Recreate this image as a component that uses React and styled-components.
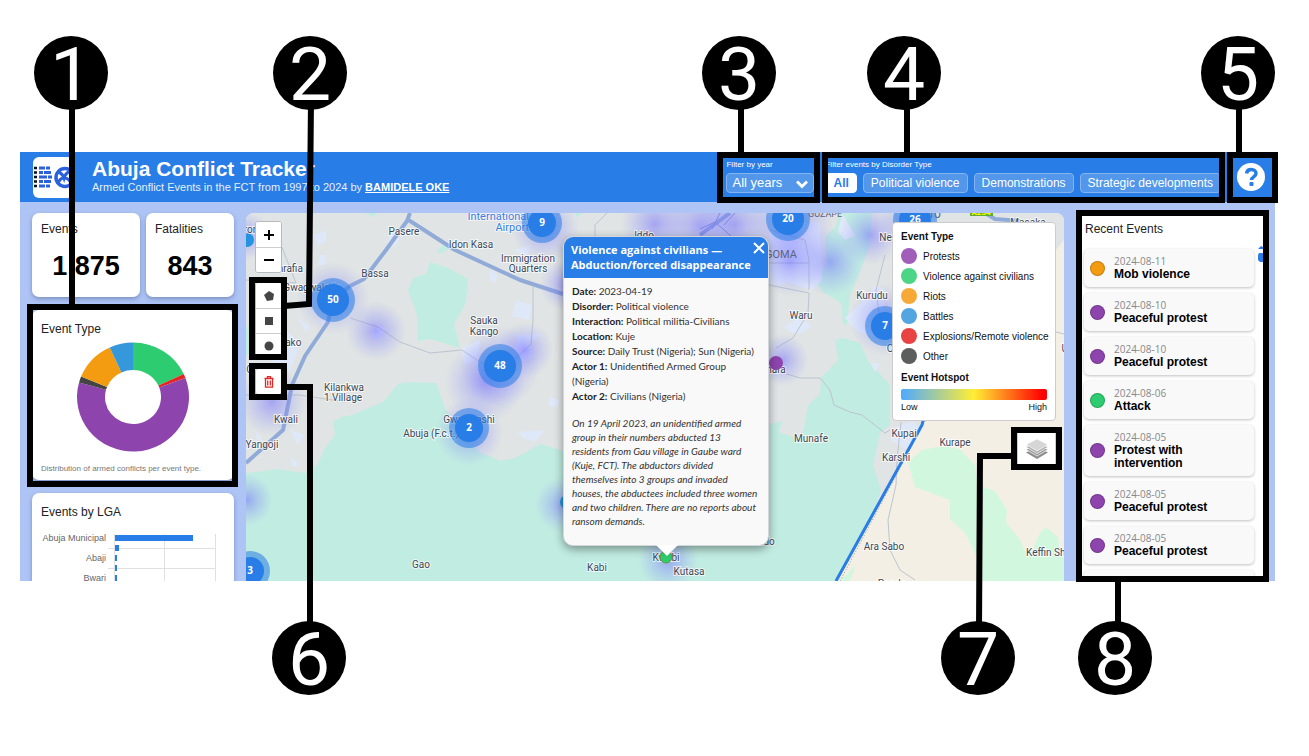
import React from "react";
import styled, { createGlobalStyle, css } from "styled-components";

const sans = '"Liberation Sans", Arial, sans-serif';
const humanist = '"Open Sans", "Noto Sans", sans-serif';
const blue = "#287de6";

const GlobalStyle = createGlobalStyle`
  *, *::before, *::after { box-sizing: border-box; }
  body { margin: 0; background: #fff; font-family: ${sans}; color: #222; }
  button, select { font: inherit; margin: 0; }
  h1, h2, h3, p, ul, dl, dd { margin: 0; padding: 0; }
`;

const Page = styled.div`
  position: relative;
  display: flex;
  flex-direction: column;
  height: 100vh;
  min-width: 1180px;
  min-height: 640px;
  padding: 152px 34px 175px 20px;
  overflow: hidden;
`;

const Dashboard = styled.main`
  display: flex;
  flex-direction: column;
  flex: 1;
  min-height: 0;
  background: #adc4f5;
  overflow: hidden;
`;

/* Header */

const Header = styled.header`
  display: flex;
  align-items: center;
  flex: none;
  height: 50px;
  padding: 0 10px 0 13px;
  background: ${blue};
  color: #fff;
`;

const LogoBox = styled.div`
  width: 41px;
  height: 41px;
  margin-right: 18px;
  border-radius: 6px;
  background: #fff;
  overflow: hidden;
  svg { display: block; }
`;

const Titles = styled.div`
  flex: 1;
  padding-bottom: 2px;
  white-space: nowrap;
`;

const Title = styled.h1`
  font-size: 21px;
  line-height: 22px;
  font-weight: 700;
`;

const Subtitle = styled.p`
  font-size: 11px;
  line-height: 14px;
  color: #e6effc;
  a { color: #fff; font-weight: 700; }
`;

const FilterGroup = styled.div`
  display: flex;
  flex-direction: column;
  gap: 3px;
  margin-left: 11px;
  padding-bottom: 2px;
  font-size: 8px;
  line-height: 10px;
  white-space: nowrap;
`;

const SelectWrap = styled.div`
  position: relative;
  display: flex;
  svg { position: absolute; right: 6px; top: 7px; pointer-events: none; }
`;

const YearSelect = styled.select`
  appearance: none;
  width: 88px;
  height: 20px;
  padding: 0 5px;
  border: 1px solid #85b4f0;
  border-radius: 4px;
  background: #5397ea;
  color: #fff;
  font-size: 13px;
  line-height: 18px;
`;

const Chips = styled.div`
  display: flex;
  gap: 6px;
`;

const Chip = styled.button`
  height: 20px;
  padding: 0 7px;
  border: 1px solid ${(p) => (p.$active ? "#fff" : "#85b4f0")};
  border-radius: 4px;
  background: ${(p) => (p.$active ? "#fff" : "#5397ea")};
  color: ${(p) => (p.$active ? blue : "#fff")};
  font-size: 12px;
  line-height: 18px;
  font-weight: ${(p) => (p.$active ? 700 : 400)};
`;

const HelpButton = styled.button`
  display: flex;
  width: 28px;
  height: 28px;
  margin-left: 16px;
  padding: 0;
  border: 0;
  background: none;
`;

/* Body columns */

const Body = styled.div`
  display: flex;
  flex: 1;
  gap: 12px;
  min-height: 0;
  padding: 11px 12px 0;
`;

const Sidebar = styled.div`
  display: flex;
  flex-direction: column;
  gap: 13px;
  width: 202px;
  flex: none;
`;

const CardRow = styled.div`
  display: flex;
  gap: 6px;
`;

const Card = styled.section`
  flex: ${(p) => p.$grow || "none"};
  height: ${(p) => (p.$height ? `${p.$height}px` : "auto")};
  padding: ${(p) => (p.$chart ? 11 : 8)}px 9px 8px;
  border-radius: 7px;
  background: #fff;
  box-shadow: 0 2px 4px rgba(60, 80, 130, 0.45);
`;

const CardTitle = styled.h2`
  font-size: 12px;
  line-height: 16px;
  font-weight: 400;
  color: #222;
`;

const Value = styled.p`
  padding-top: 14px;
  font-size: 27px;
  line-height: 30px;
  font-weight: 700;
  text-align: center;
  color: #000;
`;

const Donut = styled.svg`
  display: block;
  margin: 5px auto 11px;
`;

const Note = styled.p`
  font-size: 8px;
  line-height: 12px;
  color: #777;
  white-space: nowrap;
`;

const ChartSlot = styled.div`
  margin: 9px -9px 0 -1px;
  svg { display: block; overflow: visible; }
`;

/* Map */

const MapArea = styled.section`
  position: relative;
  flex: 1;
  min-width: 0;
  border-radius: 8px 8px 0 0;
  background: #f4efe4;
  overflow: hidden;
`;

const MapSvg = styled.svg`
  display: block;
  width: 100%;
  height: 100%;
  font-family: Roboto, sans-serif;
`;

const Controls = styled.div`
  position: absolute;
  left: 9px;
  top: 8px;
  display: flex;
  flex-direction: column;
  width: 27px;
`;

const ControlGroup = styled.div`
  margin-bottom: ${(p) => p.$after || 0}px;
  border: 1px solid #b7b9bb;
  border-radius: 3px;
  background: #fff;
  overflow: hidden;
`;

const ControlButton = styled.button`
  display: flex;
  align-items: center;
  justify-content: center;
  width: 25px;
  height: 25px;
  padding: 0;
  border: 0;
  background: #fff;
  & + & { border-top: 1px solid #ccc; }
`;

const Popup = styled.article`
  position: absolute;
  left: 317px;
  top: 23px;
  width: 206px;
  height: 310px;
  border: 1px solid #d3d6da;
  border-radius: 10px;
  background: #f9f9f9;
  box-shadow: 0 3px 10px rgba(0, 0, 0, 0.4);
  font-family: ${humanist};
  &::after {
    content: "";
    position: absolute;
    left: 92px;
    top: 308px;
    border: 11px solid transparent;
    border-top-color: #fff;
    border-bottom: 0;
  }
`;

const PopupHead = styled.header`
  display: flex;
  justify-content: space-between;
  height: 41px;
  padding: 5px 3px 0 7px;
  border-radius: 9px 9px 0 0;
  background: ${blue};
  color: #fff;
  h2 {
    font-size: 11px;
    line-height: 15px;
    font-weight: 700;
    white-space: nowrap;
  }
`;

const CloseButton = styled.button`
  display: flex;
  align-self: flex-start;
  padding: 0;
  border: 0;
  background: none;
`;

const PopupBody = styled.div`
  padding: 6px 6px 0 8px;
  font-family: Lato, ${humanist};
  font-size: 10px;
  line-height: 15px;
  color: #333;
  white-space: nowrap;
  b { color: #222; }
`;

const Story = styled.p`
  padding-top: 12px;
  line-height: 14px;
  font-style: italic;
`;

const Legend = styled.aside`
  position: absolute;
  right: 8px;
  top: 9px;
  width: 164px;
  height: 199px;
  padding: 6px 8px;
  border: 1px solid #ccc;
  border-radius: 4px;
  background: #fff;
  font-size: 10px;
  color: #111;
  h3 { font-size: 10px; line-height: 16px; font-weight: 700; }
  ul { list-style: none; padding: 3px 0 6px; }
`;

const LegendItem = styled.li`
  display: flex;
  align-items: center;
  gap: 6px;
  height: 16px;
  margin-bottom: 4px;
  &:last-child { margin-bottom: 0; }
  white-space: nowrap;
  &::before {
    content: "";
    flex: none;
    width: 16px;
    height: 16px;
    border-radius: 50%;
    background: ${(p) => p.$color};
  }
`;

const HeatBar = styled.div`
  height: 11px;
  margin-top: 3px;
  border-radius: 2px;
  background: linear-gradient(90deg, #4eaaff, #ffee35 50%, #ff0000 97%);
`;

const HeatScale = styled.div`
  display: flex;
  justify-content: space-between;
  padding-top: 1px;
  font-size: 9px;
  line-height: 12px;
`;

const LayersButton = styled.button`
  position: absolute;
  right: 8px;
  top: 219px;
  display: flex;
  align-items: center;
  justify-content: center;
  width: 39px;
  height: 34px;
  padding: 0;
  border: 1px solid #ccc;
  background: #fff;
`;

/* Recent events */

const Recent = styled.aside`
  position: relative;
  flex: none;
  display: flex;
  flex-direction: column;
  width: 187px;
  padding: 8px 9px 0;
  background: #fff;
  overflow: hidden;
`;

const EventList = styled.ul`
  display: flex;
  flex-direction: column;
  gap: 6px;
  margin-left: -1px;
  padding-top: 12px;
  list-style: none;
`;

const EventItem = styled.li`
  display: flex;
  align-items: center;
  flex: none;
  gap: 9px;
  padding: 6px 8px 6px 6px;
  border-radius: 5px;
  background: #f9f9f9;
  box-shadow: 0 1px 3px rgba(0, 0, 0, 0.25);
  &::before {
    content: "";
    flex: none;
    width: 15px;
    height: 15px;
    border: 1px solid rgba(0, 0, 0, 0.2);
    border-radius: 50%;
    background: ${(p) => p.$color};
  }
  time {
    display: block;
    font: 10px/13px ${humanist};
    color: #888;
  }
  strong {
    display: block;
    font-size: 12px;
    line-height: 13px;
    color: #000;
  }
`;

const ScrollHint = styled.svg`
  position: absolute;
  right: 0;
  top: 33px;
`;

/* Numbered callouts drawn over the dashboard */

const place = css`
  position: absolute;
  left: ${(p) => (p.$left === undefined ? "auto" : `${p.$left}px`)};
  right: ${(p) => (p.$right === undefined ? "auto" : `${p.$right}px`)};
  top: ${(p) => p.$top}px;
`;

const Frame = styled.div`
  ${place}
  width: ${(p) => p.$w}px;
  height: ${(p) => p.$h}px;
  border: 6px solid #000;
  pointer-events: none;
`;

const Marker = styled.div`
  ${place}
  width: 74px;
  height: 74px;
  border-radius: 50%;
  background: #000;
  color: #fff;
  font-family: Roboto, sans-serif;
  font-size: 75px;
  line-height: 76px;
  text-align: center;
`;

const Leaders = styled.svg`
  position: absolute;
  left: 0;
  top: 0;
  pointer-events: none;
`;

const point = (deg, rx, ry) => {
  const a = (deg * Math.PI) / 180;
  return `${(56 + rx * Math.sin(a)).toFixed(2)} ${(55 - ry * Math.cos(a)).toFixed(2)}`;
};

const slice = (from, to) => {
  const big = to - from > 180 ? 1 : 0;
  return `M${point(from, 56, 54.5)}A56 54.5 0 ${big} 1 ${point(to, 56, 54.5)}L${point(to, 28, 27)}A28 27 0 ${big} 0 ${point(from, 28, 27)}Z`;
};

const slices = [
  [0, 65, "#2ecc71"],
  [65, 69.5, "#e32626"],
  [69.5, 285.5, "#8e44ad"],
  [285.5, 292, "#444"],
  [292, 335.5, "#f39c12"],
  [335.5, 360, "#3498db"],
];

const legend = [
  ["Protests", "#a05eb9"],
  ["Violence against civilians", "#4dd586"],
  ["Riots", "#f6a937"],
  ["Battles", "#53a6e0"],
  ["Explosions/Remote violence", "#e94242"],
  ["Other", "#5c5d5d"],
];

const events = [
  ["2024-08-11", "Mob violence", "#f39c12"],
  ["2024-08-10", "Peaceful protest", "#8e44ad"],
  ["2024-08-10", "Peaceful protest", "#8e44ad"],
  ["2024-08-06", "Attack", "#2ecc71"],
  ["2024-08-05", "Protest with intervention", "#8e44ad"],
  ["2024-08-05", "Peaceful protest", "#8e44ad"],
  ["2024-08-05", "Peaceful protest", "#8e44ad"],
  ["2024-08-04", "Peaceful protest", "#8e44ad"],
];

const heat = [
  [333, 298, 36], [376, 331, 30], [500, 366, 40], [485, 382, 40], [525, 350, 28],
  [469, 432, 34], [247, 500, 26], [246, 236, 24], [272, 402, 34], [545, 228, 34],
  [566, 285, 26], [563, 505, 28], [668, 560, 30], [655, 224, 34], [700, 226, 40],
  [735, 225, 38], [790, 226, 44], [790, 262, 34], [830, 262, 34], [870, 235, 30],
  [885, 320, 36], [782, 360, 26], [910, 222, 30],
];

const clusters = [
  [542, 223, 9, 20, 14], [333, 300, 50, 22, 16], [500, 366, 48, 22, 16],
  [469, 428, 2, 20, 14], [788, 219, 20, 22, 16], [915, 220, 26, 22, 16],
  [885, 326, 7, 20, 14], [250, 571, 3, 20, 14],
];

const places = [
  [404, 235, "Pasere"], [471, 248, "Idon Kasa"], [528, 262, "Immigration"],
  [528, 272, "Quarters"], [375, 277, "Bassa"], [484, 324, "Sauka"], [484, 335, "Kango"],
  [344, 391, "Kilankwa"], [343, 401, "1 Village"], [286, 423, "Kwali"], [262, 448, "Yangoji"],
  [431, 437, "Abuja (F.c.t.)"], [469, 423, "Gwagwashi"], [421, 568, "Gao"], [597, 571, "Kabi"],
  [689, 575, "Kutasa"], [666, 561, "Kwabi"], [287, 272, "Anrafia"], [312, 291, "Gwagwalada"],
  [285, 346, "Tunako"], [258, 373, "Gurdi"], [251, 233, "ron"], [801, 319, "Waru"],
  [872, 299, "Kurudu"], [907, 241, "New Nyanya"], [900, 352, "Orozo"],
  [770, 373, "Anhara"], [811, 442, "Munafe"], [904, 437, "Kupai"],
  [896, 461, "Karshi"], [955, 446, "Kurape"], [884, 550, "Ara Sabo"],
  [1054, 556, "Keffin Shanu"], [1028, 226, "Masaka"], [1070, 352, "Uke"],
  [892, 587, "Panda"], [763, 545, "Gudo"], [644, 239, "Iddo"],
];

function MapDrawing() {
  return (
    <MapSvg viewBox="246 213 818 368" preserveAspectRatio="xMinYMin slice" role="img" aria-label="Map of conflict events in the FCT">
      <defs>
        <radialGradient id="heat">
          <stop offset="0" stopColor="#6964ff" stopOpacity="0.5" />
          <stop offset="0.5" stopColor="#7c7cff" stopOpacity="0.26" />
          <stop offset="1" stopColor="#8c90ff" stopOpacity="0" />
        </radialGradient>
      </defs>
      <path d="M246 213H1064V240L1040 300L923 421L836 581H246Z" fill="#e0e4e4" />
      <path d="M246 473L257 472L277 469L305 473L317 465L325 448L335 435L333 422L342 417L352 415L383 402L398 384L410 382L436 383L445 408L460 430L480 452L500 461L515 458L541 444L563 451L600 450L769 424L783 421L779 432L795 438L803 432L808 405L820 394L821 378L838 360L835 340L843 338L860 343L869 362L890 385L890 425L880 433L873 465L881 490L874 510L836 581H246Z" fill="#c1ece1" />
      <path d="M430 262L448 268L468 279L466 302L454 324L460 348L430 339L418 341L417 315L408 290L413 278L426 274Z" fill="#c1ece1" />
      <path d="M840 213H872L869 248L859 274L850 295L847 325L843 324L841 303L823 292L817 283L826 262L825 237L835 227Z" fill="#c1ece1" />
      <path d="M437 251L445 243L450 248L440 254ZM365 213H377L373 217ZM575 213H582L577 218ZM246 330L252 318V350L246 356Z" fill="#c1ece1" />
      <path d="M923 421L836 581H1064V240L1056 250V421Z" fill="#f4efe4" />
      <path d="M908 462L922 450L942 446L960 449L975 465L978 485L995 491L1007 510L1006 522L1020 540L1028 559L1040 533L1046 527L1058 537L1060 553L1064 556V581H980L978 560L966 534L950 519L950 500L915 487Z" fill="#d2f7df" />
      <path d="M856 565L840 581H850Z" fill="#d2f7df" />
      <g fill="#dfe8f8">
        <path d="M313 235L325 230L327 240L318 246ZM320 255H325V265H318ZM298 318L310 326L306 333ZM255 430L262 438L258 443ZM290 430L305 435L298 445ZM290 458L300 464L293 467ZM320 320L327 318L324 328ZM262 318L280 322L300 345L290 372L262 355Z" />
        <path d="M390 230L400 238L395 247L388 243ZM490 270L498 275L495 283L489 280ZM516 300L532 305L529 320L512 316ZM517 335L542 334L530 342L532 358L515 360ZM462 348L480 340L478 360L464 364ZM518 432L545 430L535 442L523 438ZM550 397L560 400L557 407L548 405ZM378 325L386 328L380 340L370 336ZM515 250L530 245L528 258Z" />
        <path d="M770 225L820 222L822 280L812 290L790 283L770 285ZM845 318L862 302L875 285L885 290L880 340L855 330ZM870 362L880 364L875 372ZM890 430L912 421L922 430L908 450L892 441Z" />
        <path d="M784 326L800 318L812 326L800 334L790 332ZM842 213V213L855 235L845 240L838 232Z" />
      </g>
      <path d="M769 390L808 395L819 395L808 405L803 432L795 438L779 430L783 421L769 424Z" fill="#e0e4e4" />
      <g fill="none" stroke="#bcc4d0" strokeWidth="1">
        <path d="M350 318L378 327L400 342L430 353L462 350L486 366M533 287V320L531 344L510 364M607 213L595 225V240M769 285L809 293L808 313L793 338L776 348M770 230L805 240L809 260V290M769 263H809M780 372L800 378L820 378L830 390L834 405L850 412L862 415L885 433L890 430M901 422L897 460L896 485L888 520L890 550L900 570L915 580M885 255L876 290L880 320M1056 332L1064 334" />
        <path d="M281 245L296 283L246 280M246 395H300L345 402" />
      </g>
      <g fill="none" stroke="#91abd8" strokeWidth="4" strokeLinejoin="round">
        <path d="M410 213L407 221L386 250L364 279L350 286L333 300L328 322L305 356L292 385L283 430L246 463M407 219L455 250L520 280L563 294M700 235L730 213M985 213L995 219L1020 221" />
      </g>
      <path d="M700 229L715 222L731 236M720 213L712 229M735 213L724 225" fill="none" stroke="#8195c8" strokeWidth="1" />
      {heat.map(([x, y, r]) => <circle key={`${x}-${y}`} cx={x} cy={y} r={r} fill="url(#heat)" />)}
      <path d="M925 421L840 581" fill="none" stroke="#999" strokeWidth="1" strokeDasharray="1 2" />
      <path d="M923 421L922 425L836 581" fill="none" stroke="#287de6" strokeWidth="3" />
      <circle cx="247" cy="240" r="7" fill="#2494e0" />
      <circle cx="567" cy="502" r="7" fill="#2494e0" />
      <rect x="970" y="207" width="23" height="9" fill="#5fae32" />
      <text x="981" y="215" fontSize="8" fontWeight="700" fill="#ff0" textAnchor="middle">A234</text>
      <g fontSize="10" textAnchor="middle" fill="#3d4859" stroke="#fff" strokeWidth="2" strokeOpacity="0.7" paintOrder="stroke">
        {places.map(([x, y, name]) => <text key={name} x={x} y={y}>{name}</text>)}
      </g>
      <g fontSize="11" textAnchor="end" fill="#3b7fe0" stroke="#fff" strokeWidth="2" strokeOpacity="0.6" paintOrder="stroke">
        <text x="529" y="220">International</text>
        <text x="529" y="231">Airport</text>
      </g>
      <g fontSize="9" fill="#5d6580">
        <text x="808" y="217">GUZAPE</text>
        <text x="765" y="258" fontSize="11">GOMA</text>
        <text x="930" y="218" fontSize="12">ro</text>
      </g>
      <circle cx="666" cy="557" r="6" fill="#2ecc71" stroke="#6d9a35" strokeWidth="1" />
      <circle cx="776" cy="363" r="7" fill="#8e44ad" />
      {clusters.map(([x, y, n, outer, inner]) => (
        <g key={n}>
          <circle cx={x} cy={y} r={outer} fill="#287de6" fillOpacity="0.55" />
          <circle cx={x} cy={y} r={inner} fill={blue} />
          <text x={x} y={y + 3} fontFamily={humanist} fontSize="10" fontWeight="700" fill="#fff" textAnchor="middle">{n}</text>
        </g>
      ))}
    </MapSvg>
  );
}

function Logo() {
  return (
    <svg width="41" height="41" viewBox="0 0 41 41" aria-hidden="true">
      <path d="M1 11h3M1 15.500h3M1 20h3M1 24.500h3M1 29h3" stroke="#111" strokeWidth="2.500" />
      <path d="M6 11h6m1 0h4M6 15.500h4m1 0h7M6 20h8m1 0h4M6 24.500h4m1 0h7M6 29h6m1 0h4" stroke="#2b61dc" strokeWidth="2.800" />
      <circle cx="32" cy="20.500" r="9" fill="none" stroke="#2b61dc" strokeWidth="3.500" />
      <path d="M25 15c3 1 5 3 6 6c1-4 4-6 7-7M25 27c1-4 3-6 6-6c3 0 6 2 7 6" fill="none" stroke="#2b61dc" strokeWidth="3" />
    </svg>
  );
}

function LgaChart() {
  const bars = [78, 4, 2, 2, 2, 2];
  return (
    <svg width="190" height="90" viewBox="0 0 190 90" role="img" aria-label="Events by LGA">
      <path d="M74.500 5V90M124.500 5V90M175.500 5V90M68 19.500H176M68 39.500H176M68 59.500H176" stroke="#e0e0e0" fill="none" />
      {bars.map((w, i) => <rect key={i} x="75" y={6 + i * 10} width={w} height="6" fill={blue} />)}
      <g fontSize="9" fill="#666" textAnchor="end">
        <text x="66" y="12">Abuja Municipal</text>
        <text x="66" y="32">Abaji</text>
        <text x="66" y="52">Bwari</text>
      </g>
    </svg>
  );
}

export default function App() {
  return (
    <Page>
      <GlobalStyle />
      <Dashboard>
        <Header>
          <LogoBox><Logo /></LogoBox>
          <Titles>
            <Title>Abuja Conflict Tracker</Title>
            <Subtitle>Armed Conflict Events in the FCT from 1997 to 2024 by <a href="#author">BAMIDELE OKE</a></Subtitle>
          </Titles>
          <FilterGroup>
            <label htmlFor="year">Filter by year</label>
            <SelectWrap>
              <YearSelect id="year" defaultValue="all"><option value="all">All years</option></YearSelect>
              <svg width="12" height="9" viewBox="0 0 12 9"><path d="M1 1.500L6 6.500L11 1.500" fill="none" stroke="#fff" strokeWidth="3" /></svg>
            </SelectWrap>
          </FilterGroup>
          <FilterGroup>
            <span id="disorder">Filter events by Disorder Type</span>
            <Chips role="group" aria-labelledby="disorder">
              <Chip $active>All</Chip>
              <Chip>Political violence</Chip>
              <Chip>Demonstrations</Chip>
              <Chip>Strategic developments</Chip>
            </Chips>
          </FilterGroup>
          <HelpButton aria-label="Help">
            <svg width="28" height="28" viewBox="0 0 28 28">
              <circle cx="14" cy="14" r="14" fill="#fff" />
              <path d="M9.500 10.500C10 7.500 12 6.500 14.200 6.500C17 6.500 19 8.200 19 10.600C19 14 14.500 13.800 14.500 17" fill="none" stroke={blue} strokeWidth="3.500" />
              <rect x="12.500" y="19" width="4" height="4" rx="1" fill={blue} />
            </svg>
          </HelpButton>
        </Header>

        <Body>
          <Sidebar>
            <CardRow>
              <Card $grow="0 0 108px" $height={84}><CardTitle>Events</CardTitle><Value>1,875</Value></Card>
              <Card $grow="1" $height={84}><CardTitle>Fatalities</CardTitle><Value>843</Value></Card>
            </CardRow>
            <Card $chart $height={170}>
              <CardTitle>Event Type</CardTitle>
              <Donut width="112" height="110" viewBox="0 0 112 110" role="img" aria-label="Event types">
                {slices.map(([from, to, color]) => <path key={color} d={slice(from, to)} fill={color} />)}
              </Donut>
              <Note>Distribution of armed conflicts per event type.</Note>
            </Card>
            <Card $chart $height={140}>
              <CardTitle>Events by LGA</CardTitle>
              <ChartSlot><LgaChart /></ChartSlot>
            </Card>
          </Sidebar>

          <MapArea>
            <MapDrawing />
            <Controls>
              <ControlGroup $after={9}>
                <ControlButton aria-label="Zoom in"><svg width="12" height="12"><path d="M6 1V11M1 6H11" stroke="#000" strokeWidth="2" /></svg></ControlButton>
                <ControlButton aria-label="Zoom out"><svg width="12" height="12"><path d="M1 6H11" stroke="#000" strokeWidth="2" /></svg></ControlButton>
              </ControlGroup>
              <ControlGroup $after={9}>
                <ControlButton aria-label="Draw a polygon"><svg width="12" height="12"><path d="M6 1L11 4L10 10L4 11L1 5Z" fill="#464646" /></svg></ControlButton>
                <ControlButton aria-label="Draw a rectangle"><svg width="12" height="12"><rect x="2" y="2" width="8" height="8" fill="#464646" /></svg></ControlButton>
                <ControlButton aria-label="Draw a circle"><svg width="12" height="12"><circle cx="6" cy="6" r="4.500" fill="#464646" /></svg></ControlButton>
              </ControlGroup>
              <ControlGroup>
                <ControlButton aria-label="Delete drawing">
                  <svg width="10" height="12" viewBox="0 0 10 12"><path d="M.5 2.500H9.500M3.500 2V.7H6.500V2M1.500 3V11.200H8.500V3M3.700 4.500V9.500M6.300 4.500V9.500" fill="none" stroke="#e32626" strokeWidth="1.300" /></svg>
                </ControlButton>
              </ControlGroup>
            </Controls>

            <Popup>
              <PopupHead>
                <h2>Violence against civilians —<br />Abduction/forced disappearance</h2>
                <CloseButton aria-label="Close"><svg width="12" height="12"><path d="M1 1L11 11M11 1L1 11" stroke="#fff" strokeWidth="2" /></svg></CloseButton>
              </PopupHead>
              <PopupBody>
                <p><b>Date:</b> 2023-04-19</p>
                <p><b>Disorder:</b> Political violence</p>
                <p><b>Interaction:</b> Political militia-Civilians</p>
                <p><b>Location:</b> Kuje</p>
                <p><b>Source:</b> Daily Trust (Nigeria); Sun (Nigeria)</p>
                <p><b>Actor 1:</b> Unidentified Armed Group<br />(Nigeria)</p>
                <p><b>Actor 2:</b> Civilians (Nigeria)</p>
                <Story>
                  On 19 April 2023, an unidentified armed<br />group in their numbers abducted 13<br />residents from Gau village in Gaube ward<br />(Kuje, FCT). The abductors divided<br />themselves into 3 groups and invaded<br />houses, the abductees included three women<br />and two children. There are no reports about<br />ransom demands.
                </Story>
              </PopupBody>
            </Popup>

            <Legend>
              <h3>Event Type</h3>
              <ul>{legend.map(([name, color]) => <LegendItem key={name} $color={color}>{name}</LegendItem>)}</ul>
              <h3>Event Hotspot</h3>
              <HeatBar />
              <HeatScale><span>Low</span><span>High</span></HeatScale>
            </Legend>

            <LayersButton aria-label="Map layers">
              <svg width="24" height="22" viewBox="0 0 24 22">
                <path d="M1 14.500L12 9L23 14.500L12 21Z" fill="#8e8e8e" />
                <path d="M1 11.500L12 6L23 11.500L12 18Z" fill="#9c9c9c" stroke="#fff" strokeWidth=".7" />
                <path d="M1 9L12 3.500L23 9L12 15.500Z" fill="#adadad" stroke="#fff" strokeWidth=".7" />
                <path d="M1 6.500L12 1L23 6.500L12 13Z" fill="#d6d6d6" stroke="#fff" strokeWidth=".7" />
              </svg>
            </LayersButton>
          </MapArea>

          <Recent>
            <CardTitle>Recent Events</CardTitle>
            <EventList>
              {events.map(([date, name, color], i) => (
                <EventItem key={i} $color={color}>
                  <div><time dateTime={date}>{date}</time><strong>{name}</strong></div>
                </EventItem>
              ))}
            </EventList>
            <ScrollHint width="5" height="18"><path d="M0 3L3 0L5 1V3ZM1 7H5V16H2L0 14V9Z" fill={blue} /></ScrollHint>
          </Recent>
        </Body>
      </Dashboard>

      <Frame $left={27} $top={304} $w={211} $h={183} />
      <Frame $left={249} $top={277} $w={38} $h={83} />
      <Frame $right={489} $top={152} $w={103} $h={51} />
      <Frame $right={84} $top={152} $w={403} $h={51} />
      <Frame $right={31} $top={152} $w={51} $h={51} />
      <Frame $left={249} $top={363} $w={38} $h={37} />
      <Frame $right={247} $top={427} $w={51} $h={43} />
      <Frame $right={40} $top={210} $w={193} $h={372} />

      <Leaders width="1309" height="756" fill="none" stroke="#000" strokeWidth="6" aria-hidden="true">
        <path d="M72 100V306M311 100L309 304L284 306M741 100V154M907 100V154M1239 100V154M284 387H310V630M1014 456H980L979 630M1118 580V630" />
      </Leaders>

      <Marker $left={34} $top={36}>1</Marker>
      <Marker $left={273} $top={36}>2</Marker>
      <Marker $right={533} $top={36}>3</Marker>
      <Marker $right={368} $top={36}>4</Marker>
      <Marker $right={34} $top={36}>5</Marker>
      <Marker $left={272} $top={621}>6</Marker>
      <Marker $right={294} $top={621}>7</Marker>
      <Marker $right={157} $top={621}>8</Marker>
    </Page>
  );
}
